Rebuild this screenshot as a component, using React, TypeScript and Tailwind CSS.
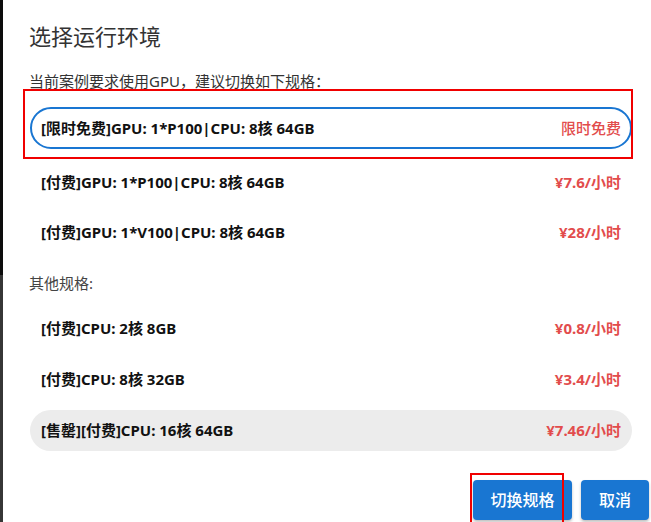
import React from "react";

// Spec picker dialog — GPU plans first, then the CPU-only ones
type Plan = {
  name: string;
  price: string;
  selected?: boolean;
  soldOut?: boolean;
  free?: boolean;
};

const gpuPlans: Plan[] = [
  { name: "[限时免费]GPU: 1*P100|CPU: 8核 64GB", price: "限时免费", selected: true, free: true },
  { name: "[付费]GPU: 1*P100|CPU: 8核 64GB", price: "¥7.6/小时" },
  { name: "[付费]GPU: 1*V100|CPU: 8核 64GB", price: "¥28/小时" },
];

const otherPlans: Plan[] = [
  { name: "[付费]CPU: 2核 8GB", price: "¥0.8/小时" },
  { name: "[付费]CPU: 8核 32GB", price: "¥3.4/小时" },
  { name: "[售罄][付费]CPU: 16核 64GB", price: "¥7.46/小时", soldOut: true },
];

function PlanRow({ plan, className = "" }: { plan: Plan; className?: string }) {
  const shell = plan.selected
    ? "h-[42px] border-2 border-[#1976d2] px-[9px]"
    : plan.soldOut
      ? "h-[41px] bg-[#ececec] px-[11px]"
      : "h-[41px] px-[11px]";
  return (
    <div className={`flex w-[602px] items-center justify-between rounded-full ${shell} ${className}`}>
      <span className="text-[15px] font-bold text-[#111]">{plan.name}</span>
      <span className={`text-[15px] text-[#e24c4c] ${plan.free ? "font-medium" : "font-bold"}`}>
        {plan.price}
      </span>
    </div>
  );
}

export default function App() {
  return (
    <div
      className="relative flex h-[522px] w-[651px] overflow-hidden bg-white"
      style={{ fontFamily: '"Noto Sans", "Noto Sans CJK SC", sans-serif' }}
    >
      {/* backdrop sliver on the left */}
      <div className="flex w-[3px] flex-col">
        <div className="h-[275px] bg-[#0c0c0c]" />
        <div className="flex-1 bg-[#363636]" />
      </div>

      <div className="flex-1 rounded-tl-[4px] bg-white pl-[27px]">
        <h2 className="mt-[21px] -ml-[1px] text-[22px] leading-[30px] font-normal text-[#333]">选择运行环境</h2>

        <p className="mt-[20px] -ml-[1px] text-[15px] leading-[20px] text-[#333]">
          当前案例要求使用GPU，建议切换如下规格：
        </p>

        <PlanRow plan={gpuPlans[0]} className="mt-[16px]" />
        <PlanRow plan={gpuPlans[1]} className="mt-[13px]" />
        <PlanRow plan={gpuPlans[2]} className="mt-[9px]" />

        <p className="mt-[20px] -ml-[1px] text-[15px] leading-[20px] text-[#444]">其他规格:</p>

        <div className="mt-[15px] flex flex-col gap-[10px]">
          {otherPlans.map((p) => (
            <PlanRow key={p.name} plan={p} />
          ))}
        </div>

        <div className="mt-[29px] flex justify-end gap-[9px] pr-[2px]">
          <button className="h-[40px] w-[99px] rounded-[4px] bg-[#1976d2] text-[16px] font-medium text-white shadow-[0_2px_3px_rgba(0,0,0,0.25)]">
            切换规格
          </button>
          <button className="h-[40px] w-[68px] rounded-[4px] bg-[#1976d2] text-[16px] font-medium text-white shadow-[0_2px_3px_rgba(0,0,0,0.25)]">
            取消
          </button>
        </div>
      </div>

      {/* highlight markers drawn over the dialog */}
      <div className="pointer-events-none absolute left-[23px] top-[89px] h-[70px] w-[610px] border-2 border-[#f00000]" />
      <div className="pointer-events-none absolute left-[470px] top-[473px] h-[60px] w-[94px] border-2 border-[#f00000]" />
    </div>
  );
}
